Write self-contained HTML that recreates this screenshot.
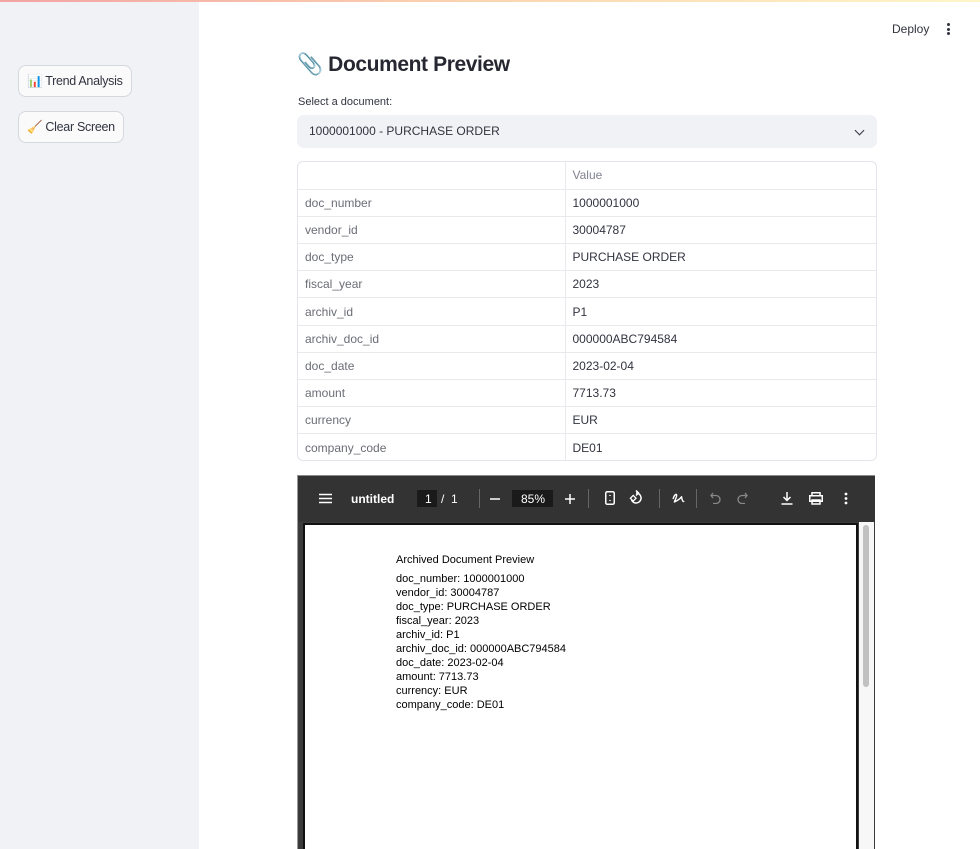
<!DOCTYPE html>
<html><head><meta charset="utf-8"><style>
*{box-sizing:border-box;margin:0;padding:0}
html,body{width:980px;height:849px;overflow:hidden}
body{font-family:"Liberation Sans",sans-serif;background:#fff;position:relative;color:#31333f}
.topbar{position:absolute;left:0;top:0;width:980px;height:2px;background:linear-gradient(90deg,#f3a3a3,#fbd6b0,#fff6c8)}
.side{position:absolute;left:0;top:2px;width:199px;height:847px;background:#f0f2f6}
.btn{position:absolute;left:18px;height:32px;border:1px solid #d5d7de;border-radius:8px;background:#fafafb;font-size:12.5px;line-height:30px;padding:0 8px;color:#31333f;letter-spacing:-0.3px;white-space:nowrap}
.deploy{position:absolute;left:892px;top:22px;font-size:12px;color:#31333f}
.dots{position:absolute;left:947px;top:23px;width:4px}
.dots i{display:block;width:3px;height:3px;border-radius:50%;background:#31333f;margin-bottom:1.5px}
h1{position:absolute;left:297px;top:53px;font-size:21px;font-weight:bold;color:#262730;letter-spacing:-0.4px}
.lbl{position:absolute;left:298px;top:96px;font-size:11px}
.sel{position:absolute;left:297px;top:115px;width:580px;height:33px;background:#f0f2f6;border-radius:7px;font-size:12px;line-height:33px;padding-left:12px}
.chev{position:absolute;right:14px;top:12px;width:7px;height:7px;border-right:1.6px solid #31333f;border-bottom:1.6px solid #31333f;transform:rotate(45deg)}
table{border-collapse:collapse;font-size:12px}
.tw{position:absolute;left:297px;top:161px;width:580px;height:300px;border:1px solid #e4e5ea;border-radius:6px;overflow:hidden}
td{height:27.2px;border-bottom:1px solid #e8e9ed;padding-left:7px;color:#31333f}
td:first-child{width:267px;border-right:1px solid #e8e9ed;color:#6b6d76}
tr:first-child td{color:#808290}
tr:last-child td{border-bottom:none}
.pdf{position:absolute;left:297px;top:475px;width:578px;height:374px;background:#3b3b3b;border-left:1px solid #9a9a9a;border-top:1px solid #8a8a8a;overflow:hidden}
.tb{position:absolute;left:0;top:0;width:577px;height:46px;background:#333;color:#fff;font-size:12px}
.tb span{position:absolute;top:16px}
.page{position:absolute;left:5px;top:47px;width:555px;height:330px;background:#fff;border:2px solid #111;border-bottom:none}
.sb{position:absolute;left:561px;top:46px;width:15px;height:330px;background:#f7f7f7}
.th{position:absolute;left:4px;top:3px;width:6px;height:162px;background:#c1c1c1;border-radius:3px}
.txt{position:absolute;left:91px;top:28px;font-size:11px;color:#000;line-height:14px}
</style></head><body>
<div class="topbar"></div>
<div class="side">
<div class="btn" style="top:63px">📊 Trend Analysis</div>
<div class="btn" style="top:109px">🧹 Clear Screen</div>
</div>
<div class="deploy">Deploy</div>
<div class="dots"><i></i><i></i><i></i></div>
<h1>📎 Document Preview</h1>
<div class="lbl">Select a document:</div>
<div class="sel">1000001000 - PURCHASE ORDER<div class="chev"></div></div>
<div class="tw"><table style="width:100%">
<tr><td></td><td>Value</td></tr>
<tr><td>doc_number</td><td>1000001000</td></tr>
<tr><td>vendor_id</td><td>30004787</td></tr>
<tr><td>doc_type</td><td>PURCHASE ORDER</td></tr>
<tr><td>fiscal_year</td><td>2023</td></tr>
<tr><td>archiv_id</td><td>P1</td></tr>
<tr><td>archiv_doc_id</td><td>000000ABC794584</td></tr>
<tr><td>doc_date</td><td>2023-02-04</td></tr>
<tr><td>amount</td><td>7713.73</td></tr>
<tr><td>currency</td><td>EUR</td></tr>
<tr><td>company_code</td><td>DE01</td></tr>
</table></div>
<div class="pdf">
<div class="tb">
<svg style="position:absolute;left:21px;top:17px" width="13" height="11"><path d="M0 1.5H13M0 5.5H13M0 9.5H13" stroke="#fff" stroke-width="1.5"/></svg>
<span style="left:53px;font-weight:bold">untitled</span>
<div style="position:absolute;left:119px;top:14px;width:20px;height:17px;background:#1a1a1a"></div>
<span style="left:127px">1</span><span style="left:143px">/ &nbsp;1</span>
<div style="position:absolute;left:181px;top:13px;width:1px;height:19px;background:#666"></div>
<svg style="position:absolute;left:192px;top:22px" width="10" height="2"><path d="M0 1H10" stroke="#fff" stroke-width="1.5"/></svg>
<div style="position:absolute;left:214px;top:14px;width:41px;height:17px;background:#1a1a1a"></div>
<span style="left:223px">85%</span>
<svg style="position:absolute;left:267px;top:18px" width="10" height="10"><path d="M0 5H10M5 0V10" stroke="#fff" stroke-width="1.5"/></svg>
<div style="position:absolute;left:290px;top:13px;width:1px;height:19px;background:#666"></div>
<svg style="position:absolute;left:307px;top:15px" width="10" height="14"><rect x="0.75" y="0.75" width="8.5" height="12.5" rx="1.5" fill="none" stroke="#fff" stroke-width="1.5"/><path d="M5 4V5M5 9V10" stroke="#fff" stroke-width="1.5"/></svg>
<svg style="position:absolute;left:331px;top:14px" width="14" height="15"><path d="M7 3A5 5 0 1 1 2.5 10" fill="none" stroke="#fff" stroke-width="1.5"/><path d="M7 0.5L9.5 3L7 5.5" fill="none" stroke="#fff" stroke-width="1.5"/><rect x="2.2" y="6.2" width="4" height="4" transform="rotate(45 4.2 8.2)" fill="none" stroke="#fff" stroke-width="1.3"/></svg>
<div style="position:absolute;left:361px;top:13px;width:1px;height:19px;background:#666"></div>
<svg style="position:absolute;left:374px;top:16px" width="13" height="12"><path d="M1 7C3 1 6 1 4 6S1 11 6 8 9 3 10 7 12 9 12 9" fill="none" stroke="#fff" stroke-width="1.4"/></svg>
<div style="position:absolute;left:398px;top:13px;width:1px;height:19px;background:#666"></div>
<svg style="position:absolute;left:412px;top:16px" width="11" height="12"><path d="M3 1L1 3.5L3 6M1 3.5H6A4 4 0 0 1 6 11.5H3" fill="none" stroke="#888" stroke-width="1.3"/></svg>
<svg style="position:absolute;left:439px;top:16px" width="11" height="12"><path d="M8 1L10 3.5L8 6M10 3.5H5A4 4 0 0 0 5 11.5H8" fill="none" stroke="#888" stroke-width="1.3"/></svg>
<svg style="position:absolute;left:483px;top:16px" width="12" height="13"><path d="M6 0V8M2.5 5L6 8.5L9.5 5M0.5 12H11.5" fill="none" stroke="#fff" stroke-width="1.5"/></svg>
<svg style="position:absolute;left:511px;top:16px" width="14" height="13"><rect x="3" y="0.75" width="8" height="3" fill="none" stroke="#fff" stroke-width="1.5"/><rect x="0.75" y="3.75" width="12.5" height="5.5" fill="none" stroke="#fff" stroke-width="1.5"/><rect x="3" y="8" width="8" height="4" fill="none" stroke="#fff" stroke-width="1.5"/></svg>
<svg style="position:absolute;left:546px;top:16px" width="4" height="13"><circle cx="2" cy="2" r="1.4" fill="#fff"/><circle cx="2" cy="6.5" r="1.4" fill="#fff"/><circle cx="2" cy="11" r="1.4" fill="#fff"/></svg>
</div>
<div class="page"><div class="txt">
<div style="margin-bottom:5px">Archived Document Preview</div>
doc_number: 1000001000<br>vendor_id: 30004787<br>doc_type: PURCHASE ORDER<br>fiscal_year: 2023<br>archiv_id: P1<br>archiv_doc_id: 000000ABC794584<br>doc_date: 2023-02-04<br>amount: 7713.73<br>currency: EUR<br>company_code: DE01
</div></div>
<div class="sb"><div class="th"></div></div>
</div>
</body></html>
